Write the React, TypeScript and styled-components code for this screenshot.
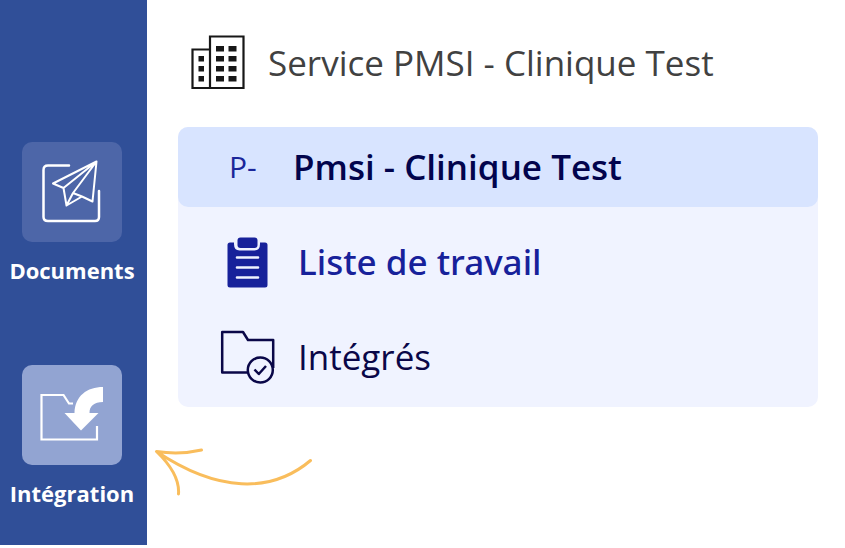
import React from "react";
import styled, { createGlobalStyle } from "styled-components";

const GlobalStyle = createGlobalStyle`
  *, *::before, *::after { box-sizing: border-box; }
  body {
    margin: 0;
    background: #ffffff;
    font-family: "Open Sans", "Noto Sans", sans-serif;
  }
`;

const Page = styled.div`
  position: relative;
  display: flex;
  min-height: 100vh;
  padding-bottom: 3px;
`;

const Sidebar = styled.nav`
  display: flex;
  flex-direction: column;
  gap: 82px;
  flex: 0 0 147px;
  padding: 142px 3px 32px 0;
  background: #304f98;
`;

const ModuleButton = styled.button`
  display: flex;
  flex-direction: column;
  align-items: center;
  gap: 16px;
  padding: 0;
  border: 0;
  background: none;
  color: #ffffff;
  font: 700 22px/25px "Open Sans", "Noto Sans", sans-serif;
  cursor: pointer;
`;

const ModuleTile = styled.span<{ $active?: boolean }>`
  display: flex;
  width: 100px;
  height: 100px;
  border-radius: 10px;
  background: ${({ $active }) => ($active ? "#92a4d2" : "#4d66a8")};
`;

const Main = styled.main`
  flex: 1;
  min-width: 0;
  padding: 35px 27px 0 31px;
`;

const ServiceHeader = styled.header`
  display: flex;
  align-items: center;
  gap: 21px;
  height: 55px;
  padding-left: 13px;
  margin-bottom: 37px;
`;

const ServiceTitle = styled.h1`
  margin: 0;
  color: #414141;
  font-size: 35px;
  font-weight: 400;
  line-height: 48px;
  white-space: nowrap;
`;

const Panel = styled.section`
  border-radius: 10px;
  background: #f0f3ff;
`;

const PanelToggle = styled.button`
  display: flex;
  align-items: center;
  width: 100%;
  height: 80px;
  padding: 0 51px;
  border: 0;
  border-radius: 10px;
  background: #d8e4ff;
  text-align: left;
  cursor: pointer;
`;

const Initials = styled.span`
  flex: 0 0 64px;
  color: #1a269a;
  font: 400 30px/40px "Open Sans", "Noto Sans", sans-serif;
`;

const PanelName = styled.span`
  color: #02044d;
  font: 600 35px/48px "Open Sans", "Noto Sans", sans-serif;
  white-space: nowrap;
`;

const FolderList = styled.ul`
  display: flex;
  flex-direction: column;
  gap: 5px;
  margin: 0;
  padding: 10px 0 5px;
  list-style: none;
`;

const FolderLink = styled.a<{ $current?: boolean }>`
  display: flex;
  align-items: center;
  gap: 20px;
  height: 90px;
  padding: 0 42px;
  color: ${({ $current }) => ($current ? "#17219a" : "#0a0748")};
  font-family: ${({ $current }) => ($current ? '"Noto Sans"' : '"Open Sans"')}, sans-serif;
  font-size: 35px;
  font-weight: ${({ $current }) => ($current ? 500 : 400)};
  line-height: 48px;
  text-decoration: none;
`;

const Callout = styled.svg`
  position: absolute;
  top: 440px;
  left: 150px;
  pointer-events: none;
`;

function PaperPlaneIcon() {
  return (
    <svg width="100" height="100" viewBox="0 0 100 100" fill="none" stroke="#fff" strokeWidth="2.5" strokeLinecap="round" strokeLinejoin="round" aria-hidden="true">
      <path d="M47 23.5H26Q21.500 23.500 21.500 28V75Q21.500 79 26 79H73Q77 79 77 75V49" />
      <path strokeWidth="2" d="M74.500 19.500L31 41.500L41.500 46L44.500 63.500L60 54.500L70.500 59.500ZM74.500 19.500L41.500 46M74.500 19.500L51 51L60 54.500M51 51L44.500 63.500" />
    </svg>
  );
}

function FolderImportIcon() {
  return (
    <svg width="100" height="100" viewBox="0 0 100 100" fill="none" aria-hidden="true">
      <path d="M51 38.500H47L41.500 30H19.500V74.500H75V61" stroke="#fff" strokeWidth="2.200" />
      <path fill="#fff" d="M81 22C65 22 53 31 52.500 48H42.500L59 65.500L76.500 48H67.500C67.500 41 72 37 81 37Z" />
    </svg>
  );
}

function BuildingsIcon() {
  const rows = [26, 36, 46, 56];
  return (
    <svg width="56" height="56" viewBox="-1 15 56 56" aria-hidden="true">
      <g fill="none" stroke="#171717" strokeWidth="2.200">
        <path d="M18 16.500H51.500V68H18ZM18 29.500H.5V68H18" />
      </g>
      <g fill="#171717">
        {rows.map((y) => (
          <React.Fragment key={y}>
            <rect x="24" y={y} width="8" height="5.500" />
            <rect x="36.500" y={y} width="8" height="5.500" />
            {y > 26 && <rect x="6.500" y={y} width="5.500" height="5.500" />}
          </React.Fragment>
        ))}
      </g>
    </svg>
  );
}

function ClipboardIcon() {
  return (
    <svg width="58" height="56" viewBox="0 0 58 56" aria-hidden="true">
      <path fill="#17219a" d="M9 8.500H14V10Q14 16.500 19.500 16.500H34.500Q40 16.500 40 10V8.500H45Q47.500 8.500 47.500 11V51Q47.500 53.500 45 53.500H10Q7.500 53.500 7.500 51V11Q7.500 8.500 10 8.500Z" />
      <rect x="17.500" y="3.500" width="20" height="10.500" rx="3" fill="#17219a" />
      <path d="M17 23.500H38M17 33.500H38M17 43.500H38" stroke="#f0f3ff" strokeWidth="2.600" strokeLinecap="round" />
    </svg>
  );
}

function FolderCheckIcon() {
  return (
    <svg width="58" height="56" viewBox="0 0 58 56" fill="none" stroke="#0a0748" strokeWidth="2.500" strokeLinejoin="round" aria-hidden="true">
      <path d="M27.500 43.500H2.200V3H23L28 11H53.200V39" />
      <circle cx="40.300" cy="41" r="12.500" />
      <path d="M34.500 40.500L38.800 45L46 37" />
    </svg>
  );
}

export default function App() {
  return (
    <>
      <GlobalStyle />
      <Page>
        <Sidebar aria-label="Modules">
          <ModuleButton type="button">
            <ModuleTile><PaperPlaneIcon /></ModuleTile>
            Documents
          </ModuleButton>
          <ModuleButton type="button" aria-current="page">
            <ModuleTile $active><FolderImportIcon /></ModuleTile>
            Intégration
          </ModuleButton>
        </Sidebar>
        <Main>
          <ServiceHeader>
            <BuildingsIcon />
            <ServiceTitle>Service PMSI - Clinique Test</ServiceTitle>
          </ServiceHeader>
          <Panel>
            <PanelToggle type="button" aria-expanded="true">
              <Initials>P-</Initials>
              <PanelName>Pmsi - Clinique Test</PanelName>
            </PanelToggle>
            <FolderList>
              <li>
                <FolderLink href="#travail" $current>
                  <ClipboardIcon />
                  Liste de travail
                </FolderLink>
              </li>
              <li>
                <FolderLink href="#integres">
                  <FolderCheckIcon />
                  Intégrés
                </FolderLink>
              </li>
            </FolderList>
          </Panel>
        </Main>
        <Callout width="170" height="65" viewBox="0 0 170 65" fill="none" stroke="#f9bd5c" strokeWidth="3" strokeLinecap="round" strokeLinejoin="round" aria-hidden="true">
          <path d="M160.500 20.500C121 54 67 52 6.500 11.500Q30 15 51.500 10M6.500 11.500Q30 34 28.500 54" />
        </Callout>
      </Page>
    </>
  );
}
